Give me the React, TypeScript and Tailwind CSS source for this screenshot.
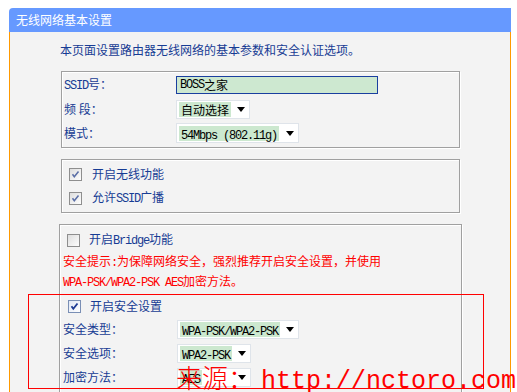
import React from 'react';

const Ascii = ({ children }: { children: React.ReactNode }) => (
  <span className="font-['Liberation_Mono'] tracking-[-1.2px]">{children}</span>
);

function CheckBox({ checked, strong }: { checked?: boolean; strong?: boolean }) {
  const border = strong ? '#7a8fb5' : '#8e8e8e';
  const mark = strong ? '#1d3b94' : '#5a6ea6';
  return (
    <svg width="13" height="13" viewBox="0 0 13 13" className="shrink-0">
      <defs>
        <linearGradient id={strong ? 'cbs' : 'cbn'} x1="0" y1="0" x2="1" y2="1">
          <stop offset="0" stopColor={strong ? '#dfe6f4' : '#dcdcdc'} />
          <stop offset="1" stopColor="#ffffff" />
        </linearGradient>
      </defs>
      <rect x="0.5" y="0.5" width="12" height="12" fill={`url(#${strong ? 'cbs' : 'cbn'})`} stroke={border} />
      {checked && (
        <path d="M3.5 6.2 L5.3 8.8 L9.5 3.5" fill="none" stroke={mark} strokeWidth={strong ? 1.8 : 1.5} />
      )}
    </svg>
  );
}

function Select({ value, width, height = 'h-[19px]' }: { value: React.ReactNode; width: string; height?: string }) {
  return (
    <div className={`${width} ${height} bg-white border border-[#dfe4ea] flex items-center justify-between pl-[2px] pr-[4px]`}>
      <span className="bg-[#cce8cf] px-[2px] h-[15px] leading-[15px] text-black whitespace-nowrap">{value}</span>
      <svg width="8" height="5" viewBox="0 0 8 5">
        <path d="M0 0 H8 L4 5 Z" fill="#000" />
      </svg>
    </div>
  );
}

const groove = 'border border-[#a0a0a0] shadow-[inset_1px_1px_0_#ffffff,1px_1px_0_#ffffff]';

export default function App() {
  return (
    <div className="relative w-[517px] h-[392px] overflow-hidden bg-white font-['Noto_Sans_CJK_SC',sans-serif] text-[12px]">
      <div className="ml-[9px] mt-[8px] w-[502px]">
        <div className="h-[24px] bg-[#6699ff] rounded-tl-[4px] pl-[7px] flex items-center text-white">
          无线网络基本设置
        </div>
        <div className="bg-[#f3f3f3] border-l border-r border-[#ff9900] h-[400px] pl-[49px] pt-[9px]">
          <div className="ml-[1px] h-[18px] leading-[18px] text-[#173c94]">
            本页面设置路由器无线网络的基本参数和安全认证选项。
          </div>

          <div className={`ml-[2px] mt-[12px] w-[399px] ${groove} pt-[1px] pb-[2px] pl-[2px] text-[#173c94]`}>
            <div className="h-[24px] flex items-center">
              <div className="w-[112px]"><Ascii>SSID</Ascii>号：</div>
              <div className="w-[202px] h-[18px] bg-[#cde8d0] border border-[#1a3f9f] pl-[3px] flex items-center text-black">
                <Ascii>BOSS</Ascii>之家
              </div>
            </div>
            <div className="h-[24px] flex items-center">
              <div className="w-[112px]">频 段：</div>
              <Select value="自动选择" width="w-[74px]" />
            </div>
            <div className="h-[24px] flex items-center">
              <div className="w-[112px]">模式：</div>
              <Select value={<Ascii>54Mbps (802.11g)</Ascii>} width="w-[123px]" height="h-[20px]" />
            </div>
          </div>

          <div className={`ml-[2px] mt-[11px] w-[399px] ${groove} pt-[2px] pb-[2px] pl-[7px] text-[#173c94]`}>
            <div className="h-[24px] flex items-center gap-[10px]">
              <CheckBox checked />
              <span>开启无线功能</span>
            </div>
            <div className="h-[24px] flex items-center gap-[10px]">
              <CheckBox checked />
              <span>允许<Ascii>SSID</Ascii>广播</span>
            </div>
          </div>

          <div className={`mt-[11px] w-[403px] h-[200px] ${groove} pt-[3px] text-[#173c94]`}>
            <div className="h-[24px] flex items-center gap-[9px] pl-[7px]">
              <CheckBox />
              <span>开启<Ascii>Bridge</Ascii>功能</span>
            </div>
            <div className="pl-[3px] leading-[18px] text-[#ff0000]">
              安全提示<Ascii>:</Ascii>为保障网络安全，强烈推荐开启安全设置，并使用
              <br />
              <Ascii>WPA-PSK/WPA2-PSK AES</Ascii>加密方法。
            </div>
            <div className="mt-[3px] h-[22px] flex items-center gap-[9px] pl-[8px]">
              <CheckBox checked strong />
              <span>开启安全设置</span>
            </div>
            <div className="pl-[3px]">
              <div className="h-[24px] flex items-center">
                <div className="w-[114px]">安全类型：</div>
                <Select value={<Ascii>WPA-PSK/WPA2-PSK</Ascii>} width="w-[122px]" />
              </div>
              <div className="h-[24px] flex items-center">
                <div className="w-[114px]">安全选项：</div>
                <Select value={<Ascii>WPA2-PSK</Ascii>} width="w-[74px]" />
              </div>
              <div className="h-[24px] flex items-center">
                <div className="w-[114px]">加密方法：</div>
                <Select value={<Ascii>AES</Ascii>} width="w-[74px]" />
              </div>
            </div>
          </div>
        </div>
      </div>

      <div className="absolute left-[28px] top-[294px] w-[456px] h-[95px] border border-[#ff0000]" />

      <div className="absolute left-[176px] top-[364px] flex items-baseline text-[#ff0000] whitespace-nowrap">
        <span className="text-[26px] leading-[26px] font-light">来源：</span>
        <span className="ml-[7px] font-['Liberation_Mono'] text-[25px] leading-[25px]">http://nctoro.com</span>
      </div>
    </div>
  );
}
